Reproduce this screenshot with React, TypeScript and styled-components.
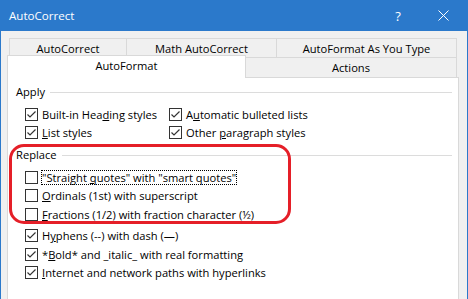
import React from 'react';
import styled, { createGlobalStyle } from 'styled-components';

const Global = createGlobalStyle`
  html, body { margin: 0; padding: 0; background: #f0f0f0; }
  body { font-family: "Open Sans", "Noto Sans", sans-serif; font-size: 11.15px; color: #000; }
`;

const BLUE = '#2b79cb';

const Window = styled.div`
  width: 468px;
  height: 299px;
  box-sizing: border-box;
  overflow: hidden;
  border-left: 1px solid ${BLUE};
  border-right: 1px solid ${BLUE};
  background: #f0f0f0;
  display: flex;
  flex-direction: column;
`;

const TitleBar = styled.div`
  height: 31px;
  flex: 0 0 31px;
  background: ${BLUE};
  color: #fff;
  display: flex;
  align-items: center;
  padding-left: 8px;
`;

const TitleText = styled.div`
  flex: 1;
  font-size: 11.6px;
  line-height: 16px;
`;

const TitleButton = styled.div<{ $w: number }>`
  width: ${(p) => p.$w}px;
  height: 31px;
  display: flex;
  align-items: center;
  justify-content: center;
  font-size: 13px;
  color: #fff;
`;

const Body = styled.div`
  flex: 1;
  display: flex;
  flex-direction: column;
  padding: 7px 8px 0 6px;
  min-height: 0;
`;

const TabRow = styled.div<{ $h: number }>`
  display: flex;
  height: ${(p) => p.$h}px;
  padding: 0 2px;
  position: relative;
`;

const Tab = styled.div<{ $w?: number }>`
  box-sizing: border-box;
  ${(p) => (p.$w ? `flex: 0 0 ${p.$w}px;` : 'flex: 1;')}
  height: 100%;
  border: 1px solid #d9d9d9;
  border-bottom: none;
  background: #f0f0f0;
  text-align: center;
  padding-top: 1px;
  line-height: 17px;
  white-space: nowrap;
  & + & { margin-left: -1px; }
`;

const SelectedTab = styled.div`
  box-sizing: border-box;
  flex: 0 0 239px;
  height: 23px;
  margin: -2px 0 0 -2px;
  border: 1px solid #d9d9d9;
  border-bottom: none;
  background: #fff;
  position: relative;
  z-index: 2;
  text-align: center;
  padding-top: 1px;
  line-height: 18px;
  & + ${Tab} { margin-left: -1px; }
`;

const Panel = styled.div`
  flex: 1;
  background: #fff;
  border: 1px solid #d9d9d9;
  border-bottom: none;
  padding: 6px 6px 0 8px;
  display: flex;
  flex-direction: column;
`;

const Group = styled.div<{ $mt?: number }>`
  position: relative;
  margin-top: ${(p) => p.$mt ?? 0}px;
`;

const GroupHeader = styled.div`
  display: flex;
  align-items: center;
  gap: 5px;
  height: 16px;
  line-height: 16px;
  margin-bottom: 5px;
`;

const GroupLine = styled.div`
  flex: 1;
  height: 1px;
  background: #dcdcdc;
`;

const Grid = styled.div`
  display: grid;
  grid-template-columns: 144px 1fr;
  padding-left: 9px;
`;

const List = styled.div<{ $mt?: number }>`
  display: flex;
  flex-direction: column;
  padding-left: 9px;
  margin-top: ${(p) => p.$mt ?? 0}px;
`;

const Row = styled.div`
  display: flex;
  align-items: center;
  height: 18.5px;
  gap: 4px;
  white-space: nowrap;
`;

const Box = styled.div`
  box-sizing: border-box;
  width: 13px;
  height: 13px;
  flex: 0 0 13px;
  border: 1px solid #333;
  background: #fff;
  display: flex;
  align-items: center;
  justify-content: center;
`;

const Label = styled.span<{ $focused?: boolean }>`
  display: inline-block;
  line-height: 13px;
  ${(p) => (p.$focused ? 'outline: 1px dotted #000; outline-offset: 0px;' : '')}
`;

const Annotation = styled.div`
  position: absolute;
  left: -7px;
  top: -3px;
  width: 282px;
  height: 80px;
  box-sizing: border-box;
  border: 3px solid #e51f28;
  border-radius: 15px;
  pointer-events: none;
`;

const Check = () => (
  <svg width="11" height="11" viewBox="0 0 11 11">
    <polyline points="1.5,5.5 4,8 9.5,2.5" fill="none" stroke="#333" strokeWidth="1.2" />
  </svg>
);

const CheckItem: React.FC<{ checked?: boolean; focused?: boolean; children: React.ReactNode }> = ({
  checked,
  focused,
  children,
}) => (
  <Row>
    <Box>{checked && <Check />}</Box>
    <Label $focused={focused}>{children}</Label>
  </Row>
);

export default function App() {
  return (
    <>
      <Global />
      <Window>
        <TitleBar>
          <TitleText>AutoCorrect</TitleText>
          <TitleButton $w={44}>?</TitleButton>
          <TitleButton $w={47}>
            <svg width="11" height="11" viewBox="0 0 11 11">
              <path d="M0.5 0.5 L10.5 10.5 M10.5 0.5 L0.5 10.5" stroke="#fff" strokeWidth="1" />
            </svg>
          </TitleButton>
        </TitleBar>
        <Body>
          <TabRow $h={19}>
            <Tab $w={118}>AutoCorrect</Tab>
            <Tab $w={151}>Math AutoCorrect</Tab>
            <Tab>AutoFormat As You Type</Tab>
          </TabRow>
          <TabRow $h={20}>
            <SelectedTab>AutoFormat</SelectedTab>
            <Tab>Actions</Tab>
          </TabRow>
          <Panel>
            <Group>
              <GroupHeader>
                Apply
                <GroupLine />
              </GroupHeader>
              <Grid>
                <CheckItem checked>
                  Built-in Hea<u>d</u>ing styles
                </CheckItem>
                <CheckItem checked>
                  A<u>u</u>tomatic bulleted lists
                </CheckItem>
                <CheckItem checked>
                  <u>L</u>ist styles
                </CheckItem>
                <CheckItem checked>
                  Other <u>p</u>aragraph styles
                </CheckItem>
              </Grid>
            </Group>
            <Group $mt={5}>
              <GroupHeader>
                Replace
                <GroupLine />
              </GroupHeader>
              <List>
                <CheckItem focused>
                  "Straight <u>q</u>uotes" with "smart quotes"
                </CheckItem>
                <CheckItem>
                  <u>O</u>rdinals (1st) with superscript
                </CheckItem>
                <CheckItem>
                  <u>F</u>ractions (1/2) with fraction character (½)
                </CheckItem>
              </List>
              <Annotation />
            </Group>
            <List $mt={3}>
              <CheckItem checked>
                H<u>y</u>phens (--) with dash (—)
              </CheckItem>
              <CheckItem checked>
                *<u>B</u>old* and _italic_ with real formatting
              </CheckItem>
              <CheckItem checked>
                <u>I</u>nternet and network paths with hyperlinks
              </CheckItem>
            </List>
          </Panel>
        </Body>
      </Window>
    </>
  );
}
